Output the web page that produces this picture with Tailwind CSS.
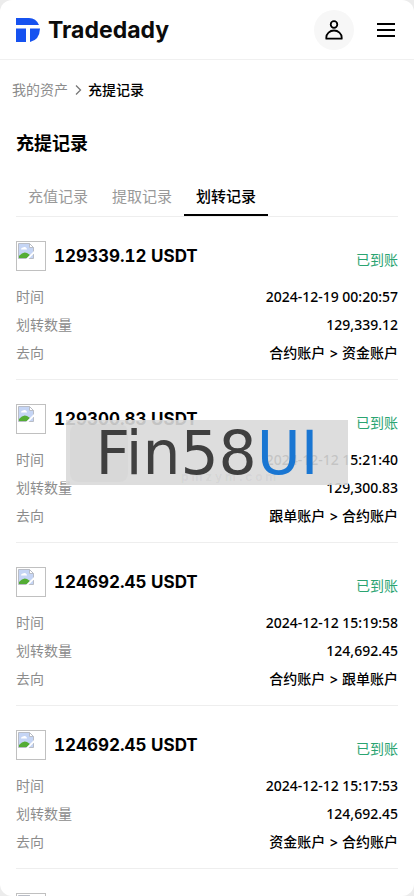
<!DOCTYPE html>
<html lang="zh-CN">
<head>
  <meta charset="UTF-8">
  <meta name="viewport" content="width=device-width, initial-scale=1.0">
  <title>充提记录</title>
  <script src="https://cdn.jsdelivr.net/npm/@tailwindcss/browser@4"></script>
</head>
<body class="bg-[#ececec] font-['Inter','Noto_Sans_CJK_SC',sans-serif] text-black">
  <svg class="hidden">
    <!-- Заглушка для иконки монеты -->
    <symbol id="coin" viewBox="0 0 16 16">
      <path d="M0.500 0.500h11l4 4v11h-15z" fill="#c5d5f5" stroke="#b9bdc6" />
      <path d="M3 6.500a2 2 0 0 1 2-2a2.500 2.500 0 0 1 4 2z" fill="#fff" />
      <path d="M1 15v-2q4-5 8-3l3 2-3 3z" fill="#54ad35" />
      <path d="M11.500 0.500v4h4z" fill="#fff" stroke="#b9bdc6" />
      <path d="M8 16l8-8v2.500L10.500 16z" fill="#fff" />
    </symbol>
  </svg>

  <div class="relative h-screen overflow-hidden rounded-xl bg-white">
    <header class="flex h-[60px] items-center justify-between border-b border-[#f0f0f0] px-4">
      <a href="#" class="flex items-center gap-2">
        <svg class="size-6" viewBox="0 0 24 24" fill="#1652f0">
          <path d="M0 0h13q7 0 10 7H0z" />
          <path d="M0 10.500h10V24H0z" />
          <path d="M14 10.500h10Q23.500 22 14 24z" />
        </svg>
        <span class="font-['Inter'] text-[23px] leading-6 font-bold text-[#0b0b0b]">Tradedady</span>
      </a>
      <div class="flex items-center gap-5">
        <button aria-label="账户" class="flex size-10 items-center justify-center rounded-full bg-[#f7f7f7]">
          <svg class="size-6" viewBox="0 0 24 24" fill="none" stroke="#000" stroke-width="1.800">
            <circle cx="12" cy="6.500" r="3.300" />
            <path d="M4.300 20.700v-1.200a7.700 7 0 0 1 15.400 0v1.200z" stroke-linejoin="round" />
          </svg>
        </button>
        <button aria-label="菜单" class="flex h-10 w-6 items-center justify-center">
          <svg class="size-6" viewBox="0 0 24 24" stroke="#000" stroke-width="2">
            <path d="M3 6h18M3 12h18M3 18h18" />
          </svg>
        </button>
      </div>
    </header>

    <nav class="flex items-center px-3 pt-5 text-sm">
      <a href="#" class="text-[#8c8c8c]">我的资产</a>
      <svg class="mx-1 size-3" viewBox="0 0 12 12" fill="none" stroke="#777" stroke-width="1.300">
        <path d="M4 1.500L8.500 6L4 10.500" />
      </svg>
      <span class="font-medium">充提记录</span>
    </nav>

    <main class="px-4 pt-[30px]">
      <h1 class="text-lg font-bold">充提记录</h1>

      <div class="mt-5 flex border-b border-[#eee] text-[15px]">
        <button class="h-[38px] px-3 text-[#999]">充值记录</button>
        <button class="h-[38px] px-3 text-[#999]">提取记录</button>
        <button class="h-[38px] border-b-2 border-black px-3 pt-0.5 font-medium">划转记录</button>
      </div>

      <ul id="records"></ul>
    </main>

    <!-- Водяной знак -->
    <div class="absolute top-[420px] left-[66px] flex h-[65px] w-[282px] items-center justify-center bg-[#d9d9d9]/90 font-['DejaVu_Sans'] text-[60px] leading-none text-[#3f3f3f]">
      <span class="absolute top-1 left-1 size-[58px] rounded-lg bg-black/2"></span>
      <span class="absolute bottom-0 left-[115px] font-['Inter'] text-xs font-bold whitespace-nowrap text-black/5">p m z y m . c o m</span>
      <span class="relative">Fin58<span class="text-[#1976d2]">UI</span></span>
    </div>
  </div>

  <script>
    const records = [
      ['129339.12', '2024-12-19 00:20:57', '129,339.12', '合约账户 > 资金账户'],
      ['129300.83', '2024-12-12 15:21:40', '129,300.83', '跟单账户 > 合约账户'],
      ['124692.45', '2024-12-12 15:19:58', '124,692.45', '合约账户 > 跟单账户'],
      ['124692.45', '2024-12-12 15:17:53', '124,692.45', '资金账户 > 合约账户'],
      ['', '', '', ''],
    ];

    document.getElementById('records').innerHTML = records.map(([sum, time, amount, target]) => `
      <li class="border-b border-[#eee] pt-6 pb-3">
        <div class="flex h-[30px] items-center">
          <span class="size-[30px] border border-[#c0c0c0] p-px"><svg class="size-4"><use href="#coin" /></svg></span>
          <span class="ml-2 pt-0.5 text-[17px] font-bold tabular-nums">${sum ? sum + ' USDT' : ''}</span>
          <span class="ml-auto self-end pb-px text-sm text-[#2ba471]">${sum ? '已到账' : ''}</span>
        </div>
        <dl class="mt-3 text-sm">
          <div class="flex h-7 items-center justify-between"><dt class="text-[#8c8c8c]">${sum ? '时间' : ''}</dt><dd class="font-['Noto_Sans'] font-medium">${time}</dd></div>
          <div class="flex h-7 items-center justify-between"><dt class="text-[#8c8c8c]">${sum ? '划转数量' : ''}</dt><dd class="font-['Noto_Sans'] font-medium">${amount}</dd></div>
          <div class="flex h-7 items-center justify-between"><dt class="text-[#8c8c8c]">${sum ? '去向' : ''}</dt><dd class="font-medium">${target}</dd></div>
        </dl>
      </li>`).join('');
  </script>
</body>
</html>
